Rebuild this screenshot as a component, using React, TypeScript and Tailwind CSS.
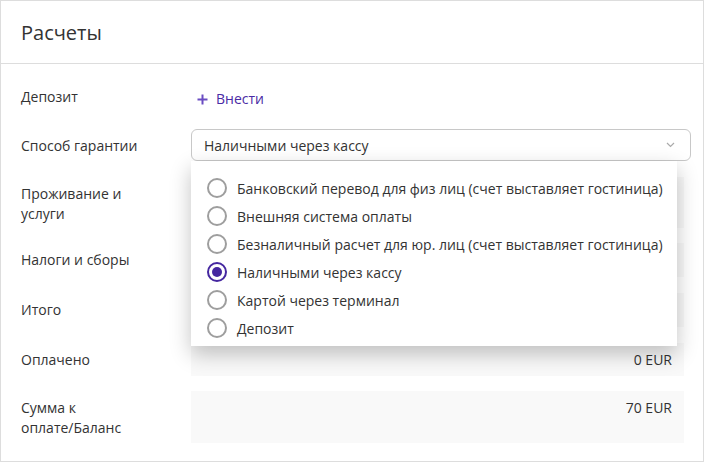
import { ReactNode } from "react";

const options = [
	"Банковский перевод для физ лиц (счет выставляет гостиница)",
	"Внешняя система оплаты",
	"Безналичный расчет для юр. лиц (счет выставляет гостиница)",
	"Наличными через кассу",
	"Картой через терминал",
	"Депозит",
];

const selected = "Наличными через кассу";

function Row({ label, children, className = "" }: { label: ReactNode; children: ReactNode; className?: string }) {
	return (
		<div className={"flex items-stretch " + className}>
			<div className="w-[170px] shrink-0 pt-[7px] pr-4 leading-5">{label}</div>
			<div className="flex-1">{children}</div>
		</div>
	);
}

function AmountBox({ value, className = "" }: { value?: string; className?: string }) {
	return (
		<div className={"h-full bg-[#f9f9f9] px-3 py-[7px] text-right leading-5 " + className}>
			{value}
		</div>
	);
}

function Radio({ checked }: { checked: boolean }) {
	return (
		<span
			className={
				"flex h-[20px] w-[20px] shrink-0 items-center justify-center rounded-full border-2 " +
				(checked ? "border-[#4527a0]" : "border-[#9e9e9e]")
			}
		>
			{checked && <span className="h-[10px] w-[10px] rounded-full bg-[#4527a0]" />}
		</span>
	);
}

export default function App() {
	return (
		<div className="h-[463px] w-[704px] bg-white font-['Open_Sans',sans-serif] text-[14px] text-[#333]">
			<div className="h-[462px] w-[704px] border border-[#dddddd]">
				<div className="flex h-[63px] items-center border-b border-[#dddddd] px-5">
					<h2 className="pt-px text-[20px] text-[#333]">Расчеты</h2>
				</div>

				<div className="flex flex-col pl-5 pr-[19px] pt-4">
					<Row label="Депозит" className="h-[34px]">
						<button className="flex items-center gap-2 pl-[6px] pt-[9px] leading-5 text-[#4a2aa5]">
							<svg width="11" height="11" viewBox="0 0 11 11" className="text-[#6a4cc2]">
								<path d="M5.5 0.5v10M0.5 5.5h10" stroke="currentColor" strokeWidth="2" />
							</svg>
							<span>Внести</span>
						</button>
					</Row>

					<Row label="Способ гарантии" className="mt-[15px]">
						<div className="relative mr-[-7px]">
							<div className="flex h-[32px] items-center justify-between rounded-[6px] border border-[#c8c8c8] pl-3 pr-[15px]">
								<span>{selected}</span>
								<svg width="9" height="6" viewBox="0 0 9 6">
									<path d="M1 1l3.5 3.5L8 1" fill="none" stroke="#aaaaaa" strokeWidth="1.2" />
								</svg>
							</div>
							<ul className="absolute left-0 top-[32px] z-10 w-[486px] bg-white pb-[4px] pt-[13px] shadow-[0_8px_20px_rgba(0,0,0,0.24)]">
								{options.map(option => (
									<li key={option} className="flex h-[28px] items-center gap-[10px] pl-4">
										<Radio checked={option === selected} />
										<span>{option}</span>
									</li>
								))}
							</ul>
						</div>
					</Row>

					<Row label={<>Проживание и<br />услуги</>} className="mt-4 h-[51px]">
						<AmountBox />
					</Row>
					<Row label="Налоги и сборы" className="mt-[15px] h-[34px]">
						<AmountBox />
					</Row>
					<Row label="Итого" className="mt-4 h-[34px]">
						<AmountBox />
					</Row>
					<Row label="Оплачено" className="mt-4 h-[33px]">
						<AmountBox value="0 EUR" />
					</Row>
					<Row label={<>Сумма к<br />оплате/Баланс</>} className="mt-[15px] h-[52px]">
						<AmountBox value="70 EUR" />
					</Row>
				</div>
			</div>
		</div>
	);
}
